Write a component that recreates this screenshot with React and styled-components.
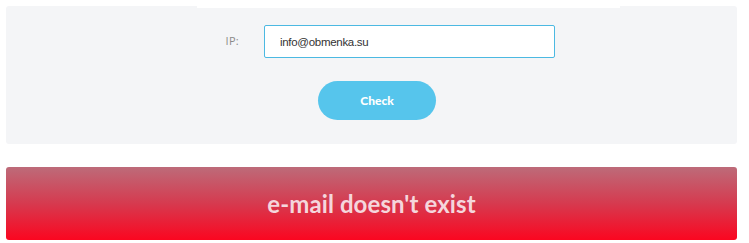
import React from "react";
import styled, { createGlobalStyle } from "styled-components";

const Global = createGlobalStyle`
  html, body {
    margin: 0;
    background: #fff;
  }
  body {
    padding: 6px;
    width: 731px;
    font-family: "Open Sans", "Liberation Sans", sans-serif;
  }
`;

const Panel = styled.div`
  position: relative;
  background: #f4f5f7;
  border-radius: 3px;
  padding: 19px 0 24px;
  display: flex;
  flex-direction: column;
  align-items: center;
  gap: 23px;

  .tab {
    position: absolute;
    top: -6px;
    left: 191px;
    width: 423px;
    height: 8px;
    background: #fff;
  }
`;

const Row = styled.div`
  display: flex;
  align-items: center;
  justify-content: center;
  width: 100%;
  box-sizing: border-box;
  padding-left: 18px;
`;

const Label = styled.label`
  width: 58px;
  box-sizing: border-box;
  padding-right: 25px;
  text-align: right;
  font-size: 11px;
  color: #8a8a8a;
  letter-spacing: 0.3px;
  margin-top: -2px;
`;

const Input = styled.input`
  width: 291px;
  height: 33px;
  box-sizing: border-box;
  border: 1px solid #4cb9e2;
  border-radius: 2px;
  background: #fff;
  padding: 0 15px;
  font-family: "Liberation Sans", Arial, sans-serif;
  font-size: 11.5px;
  letter-spacing: -0.3px;
  color: #333;
  outline: none;
`;

const Button = styled.button`
  width: 118px;
  height: 39px;
  margin-left: 11px;
  border: none;
  border-radius: 20px;
  background: #56c5ec;
  color: #fff;
  font-family: "Lato", "Open Sans", sans-serif;
  font-weight: 900;
  font-size: 12px;
  cursor: pointer;
`;

const Alert = styled.div`
  margin-top: 23px;
  height: 73px;
  border-radius: 3px;
  background: linear-gradient(to bottom, #bd6b79 0%, #d63a4f 50%, #fb0620 100%);
  display: flex;
  align-items: center;
  justify-content: center;
  color: #f5d6dc;
  font-family: "Lato", "Open Sans", sans-serif;
  font-weight: 700;
  font-size: 24px;
  letter-spacing: 0.1px;
`;

export default function App() {
  return (
    <>
      <Global />
      <Panel>
        <div className="tab" />
        <Row>
          <Label>IP:</Label>
          <Input defaultValue="info@obmenka.su" />
        </Row>
        <Button>Check</Button>
      </Panel>
      <Alert>e-mail doesn't exist</Alert>
    </>
  );
}
